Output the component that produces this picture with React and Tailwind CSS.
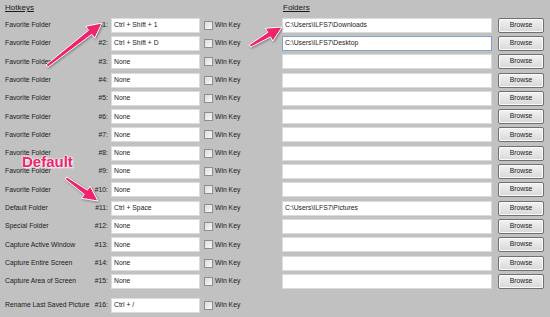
const hotkeys = [
  ["Favorite Folder", "#1:", "Ctrl + Shift + 1"],
  ["Favorite Folder", "#2:", "Ctrl + Shift + D"],
  ["Favorite Folder", "#3:", "None"],
  ["Favorite Folder", "#4:", "None"],
  ["Favorite Folder", "#5:", "None"],
  ["Favorite Folder", "#6:", "None"],
  ["Favorite Folder", "#7:", "None"],
  ["Favorite Folder", "#8:", "None"],
  ["Favorite Folder", "#9:", "None"],
  ["Favorite Folder", "#10:", "None"],
  ["Default Folder", "#11:", "Ctrl + Space"],
  ["Special Folder", "#12:", "None"],
  ["Capture Active Window", "#13:", "None"],
  ["Capture Entire Screen", "#14:", "None"],
  ["Capture Area of Screen", "#15:", "None"],
];

const folders = [
  "C:\\Users\\ILFS7\\Downloads",
  "C:\\Users\\ILFS7\\Desktop",
  "", "", "", "", "", "", "", "",
  "C:\\Users\\ILFS7\\Pictures",
  "", "", "", "",
];

function arrowPoints(x1, y1, x2, y2) {
  const dx = x2 - x1;
  const dy = y2 - y1;
  const len = Math.sqrt(dx * dx + dy * dy);
  const ux = dx / len;
  const uy = dy / len;
  const nx = -uy;
  const ny = ux;
  const head = 15;
  const hw = 7.5;
  const sw = 2.6;
  const tw = 1.4;
  const bx = x2 - ux * head;
  const by = y2 - uy * head;
  const pts = [
    [x1 + nx * tw, y1 + ny * tw],
    [bx + nx * sw, by + ny * sw],
    [bx + nx * hw, by + ny * hw],
    [x2, y2],
    [bx - nx * hw, by - ny * hw],
    [bx - nx * sw, by - ny * sw],
    [x1 - nx * tw, y1 - ny * tw],
  ];
  return pts.map((p) => p[0].toFixed(1) + "," + p[1].toFixed(1)).join(" ");
}

function TextBox({ value, className, focused }) {
  return (
    <div
      className={
        "h-[15px] bg-white border flex items-center px-[2px] text-[6.8px] text-[#1a1a1a] whitespace-nowrap overflow-hidden " +
        (focused ? "border-[#7ea4cc] " : "border-[#dcdcdc] ") +
        className
      }
    >
      {value}
    </div>
  );
}

function HotkeyRow({ label, num, value }) {
  return (
    <div className="h-[18.3px] flex items-center">
      <div className="w-[90px] pl-[5px] whitespace-nowrap">{label}</div>
      <div className="w-[19px] text-right pr-[1px]">{num}</div>
      <TextBox value={value} className="ml-[2px] w-[89px]" />
      <div className="ml-[4px] w-[9px] h-[9px] border border-[#8e8e8e] bg-gradient-to-br from-[#dcdcdc] to-[#f8f8f8]" />
      <div className="ml-[2px] whitespace-nowrap">Win Key</div>
    </div>
  );
}

function FolderRow({ value, focused }) {
  return (
    <div className="h-[18.3px] flex items-center">
      <TextBox value={value} focused={focused} className="w-[210px]" />
      <button className="ml-[6px] w-[46px] h-[15px] text-[6.8px] text-[#1a1a1a] bg-gradient-to-b from-[#f2f2f2] to-[#d8d8d8] border border-[#707070] rounded-[2px] shadow-[inset_0_0_0_1px_#fafafa] leading-none">
        Browse
      </button>
    </div>
  );
}

export default function App() {
  return (
    <div className="relative w-[550px] h-[317px] bg-[#c1c1c1] overflow-hidden text-[6.8px] text-[#1a1a1a] font-['Liberation_Sans',Arial,sans-serif]">
      <div className="flex">
        <div className="w-[277px]">
          <div className="h-[16px] flex items-center pl-[5px] text-[8px] underline">Hotkeys</div>
          {hotkeys.map((h, i) => (
            <HotkeyRow key={i} label={h[0]} num={h[1]} value={h[2]} />
          ))}
          <div className="mt-[5.5px]">
            <HotkeyRow label="Rename Last Saved Picture" num="#16:" value="Ctrl + /" />
          </div>
        </div>
        <div className="pl-[5px]">
          <div className="h-[16px] flex items-center pl-[1px] text-[8px] underline">Folders</div>
          {folders.map((f, i) => (
            <FolderRow key={i} value={f} focused={i === 1} />
          ))}
        </div>
      </div>

      <div className="absolute left-[22px] top-[154px] text-[15px] font-bold text-[#f0236e] leading-none [text-shadow:0_0_2px_#fff,0_0_2px_#fff,1px_1px_2px_#fff]">
        Default
      </div>

      <svg className="absolute left-0 top-0 pointer-events-none" width="550" height="317">
        <g fill="#f0236e" stroke="#ffffff" strokeWidth="1" strokeLinejoin="round" style={{ filter: "drop-shadow(1px 1px 1px rgba(0,0,0,0.35))" }}>
          <polygon points={arrowPoints(47, 66, 102, 23)} />
          <polygon points={arrowPoints(250, 46, 282, 27)} />
          <polygon points={arrowPoints(66, 178, 98, 201)} />
        </g>
      </svg>
    </div>
  );
}
